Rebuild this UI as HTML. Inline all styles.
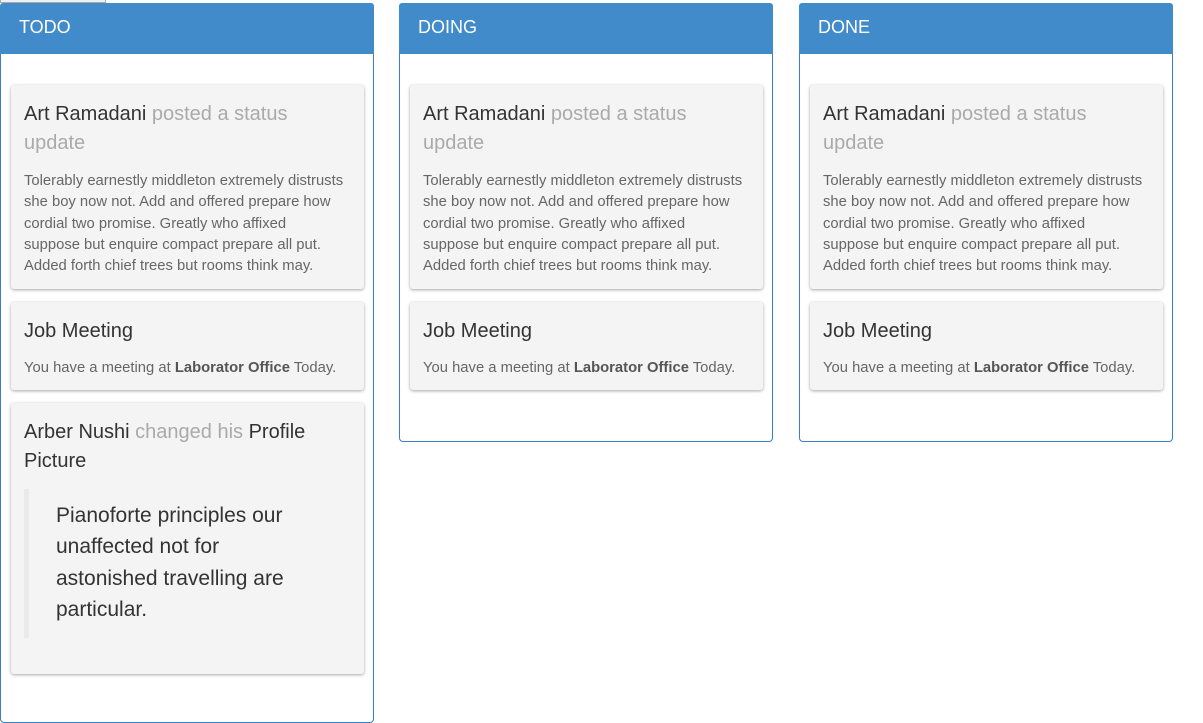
<!DOCTYPE html>
<html><head><style>
body{margin:0;background:#fff;font-family:"Liberation Sans",sans-serif;width:1203px;height:696px;overflow:hidden;position:relative}
.tab{position:absolute;left:0;top:-1px;width:104px;height:3px;border:1px solid #aaa;border-top:none;background:#f0f0f0}
.col{position:absolute;top:3px;border:1px solid #3a7fc1;border-radius:4px;background:#fff;box-sizing:border-box;width:374px}
.hd{background:#428bca;color:#fff;height:51px;box-sizing:border-box;padding:14px 19px 0;font-size:18px;border-radius:3px 3px 0 0;margin:-1px -1px 0}
.body{padding:31px 9px 0 10px}
.card{background:#f4f4f4;border-radius:3px;box-shadow:0 1px 3px rgba(0,0,0,.35);padding:15px 10px 10px 13px;margin-bottom:13px;color:#333}
.card.first{padding-bottom:12px}
.t{font-size:20px;line-height:29px;color:#333}
.g{color:#aaa}
.p{font-size:14.8px;line-height:21.3px;color:#666;margin-top:13px;white-space:nowrap}
.p b{color:#555}
blockquote{margin:13px 0 0 0;border-left:5px solid #eaeaea;padding:11px 50px 12px 27px;font-size:21px;line-height:31.5px;color:#333}
</style></head><body>
<div class="tab"></div>

<div class="col" style="left:0;height:720px">
<div class="hd">TODO</div>
<div class="body">
<div class="card first"><div class="t">Art Ramadani <span class="g">posted a status<br>update</span></div>
<div class="p">Tolerably earnestly middleton extremely distrusts<br>she boy now not. Add and offered prepare how<br>cordial two promise. Greatly who affixed<br>suppose but enquire compact prepare all put.<br>Added forth chief trees but rooms think may.</div></div>
<div class="card"><div class="t">Job Meeting</div><div class="p" style="margin-top:12px">You have a meeting at <b>Laborator Office</b> Today.</div></div>
<div class="card" style="padding-bottom:36px"><div class="t">Arber Nushi <span class="g">changed his</span> Profile<br>Picture</div>
<blockquote>Pianoforte principles our<br>unaffected not for<br>astonished travelling are<br>particular.</blockquote></div>
</div></div>

<div class="col" style="left:399px;height:439px">
<div class="hd">DOING</div>
<div class="body">
<div class="card first"><div class="t">Art Ramadani <span class="g">posted a status<br>update</span></div>
<div class="p">Tolerably earnestly middleton extremely distrusts<br>she boy now not. Add and offered prepare how<br>cordial two promise. Greatly who affixed<br>suppose but enquire compact prepare all put.<br>Added forth chief trees but rooms think may.</div></div>
<div class="card"><div class="t">Job Meeting</div><div class="p" style="margin-top:12px">You have a meeting at <b>Laborator Office</b> Today.</div></div>
</div></div>

<div class="col" style="left:799px;height:439px">
<div class="hd">DONE</div>
<div class="body">
<div class="card first"><div class="t">Art Ramadani <span class="g">posted a status<br>update</span></div>
<div class="p">Tolerably earnestly middleton extremely distrusts<br>she boy now not. Add and offered prepare how<br>cordial two promise. Greatly who affixed<br>suppose but enquire compact prepare all put.<br>Added forth chief trees but rooms think may.</div></div>
<div class="card"><div class="t">Job Meeting</div><div class="p" style="margin-top:12px">You have a meeting at <b>Laborator Office</b> Today.</div></div>
</div></div>
</body></html>
